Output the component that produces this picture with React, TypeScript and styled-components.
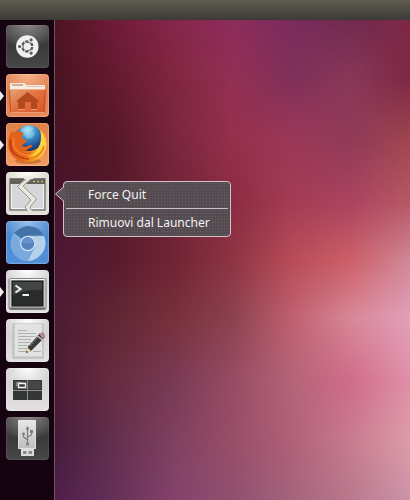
import React from "react";
import styled, { createGlobalStyle, css } from "styled-components";

const GlobalStyle = createGlobalStyle`
  *, *::before, *::after { box-sizing: border-box; }
  body { margin: 0; background: #4c1c34; font-family: "Noto Sans", sans-serif; }
`;

const Desktop = styled.div`
  display: flex;
  flex-direction: column;
  min-height: 100vh;
`;

const TopPanel = styled.header`
  height: 20px;
  background: linear-gradient(#5f5b51, #3c3b37);
`;

const Workspace = styled.div`
  display: flex;
  flex: 1;
`;

const Launcher = styled.nav`
  position: relative;
  z-index: 1;
  width: 55px;
  padding: 5px 5px 16px 6px;
  background: #150410;
  border-right: 1px solid #735463;
`;

const LauncherList = styled.ul`
  display: flex;
  flex-direction: column;
  gap: 6px;
  margin: 0;
  padding: 0;
  list-style: none;
`;

const LauncherItem = styled.li<{ $running?: boolean }>`
  position: relative;
  height: 43px;
  ${(p) =>
    p.$running &&
    css`
      &::before {
        content: "";
        position: absolute;
        left: -6px;
        top: 17px;
        border: solid transparent;
        border-width: 5px 0 5px 4px;
        border-left-color: #eceaec;
      }
    `}
`;

const tones = {
  dark: "radial-gradient(ellipse 70% 55% at 50% 0, #858585, transparent), linear-gradient(#444444, #3a3a3a 50%, #484848)",
  orange: "radial-gradient(ellipse 70% 60% at 50% 0, #f7b58c, transparent), linear-gradient(#dc7443, #e78a59)",
  peach: "linear-gradient(#df8146, #f39b62)",
  cream: "radial-gradient(ellipse 60% 50% at 50% 0, #fffff5, transparent), linear-gradient(#d3d1c7, #e3e1d9)",
  blue: "radial-gradient(ellipse 65% 50% at 50% 0, #9bc1ec, transparent), linear-gradient(#4683cb, #5291d9)",
  light: "radial-gradient(ellipse 60% 50% at 50% 0, #ffffff, transparent), linear-gradient(#cccaca, #e3e1e1)",
};

const Tile = styled.button<{ $tone: keyof typeof tones }>`
  display: block;
  width: 43px;
  height: 43px;
  padding: 0;
  border: 0;
  border-radius: 4px;
  background: ${(p) => tones[p.$tone]};
  box-shadow: inset 0 0 1px 1px rgba(255, 255, 255, ${(p) => (p.$tone === "dark" ? 0.08 : 0.22)});
  cursor: pointer;

  svg { display: block; }
`;

const Quicklist = styled.div`
  position: absolute;
  left: 57px;
  top: 9px;
  width: 168px;
  padding: 0 2px;
  border: 1px solid #d3c3c9;
  border-radius: 4px;
  background: radial-gradient(circle, #686064 30%, transparent 32%) 0 0 / 3px 3px #544c50;
`;

const Pointer = styled.svg`
  position: absolute;
  left: -9px;
  top: 3px;
`;

const QuicklistEntry = styled.button`
  display: block;
  width: 100%;
  height: 26px;
  padding: 0 0 0 22px;
  border: 0;
  background: none;
  color: #f4f0f2;
  font: 12px/26px "Noto Sans", sans-serif;
  text-align: left;
  white-space: nowrap;
  cursor: pointer;

  & + & {
    height: 28px;
    border-top: 1px solid #cdbfc5;
    line-height: 27px;
  }
`;

const Wallpaper = styled.main`
  position: relative;
  flex: 1;
  overflow: hidden;
`;

const ColourBand = styled.div<{ $from: number; $to: number; $colours: string }>`
  position: absolute;
  inset: 0;
  background: linear-gradient(90deg, ${(p) => p.$colours});
  mask-image: linear-gradient(transparent ${(p) => p.$from}%, #000 ${(p) => p.$to}%);
`;

const bands = [
  { at: 0, colours: "#4e1424, #701c38, #86264a, #8e2c5c, #7a2c5c, #702a50, #802844" },
  { at: 12, colours: "#4a1420, #641a30, #80263f, #943054, #80305a, #8a3858, #7c2844" },
  { at: 25, colours: "#481424, #561828, #78263e, #96304c, #9c3858, #903a58, #a04650" },
  { at: 38, colours: "#4a1530, #54182a, #702438, #8c2c42, #a43c54, #ac4460, #b85866" },
  { at: 50, colours: "#4c1834, #581c2e, #702434, #8e3444, #b84c58, #cc6068, #d08898" },
  { at: 62, colours: "#4e1c34, #602634, #78303c, #8c4250, #c06070, #d88898, #e2a0ba" },
  { at: 75, colours: "#4c1c34, #682c40, #783a54, #984c64, #b46478, #d06c8a, #e090a8" },
  { at: 88, colours: "#461c3a, #62304e, #804060, #984e68, #b06078, #c87c90, #dc9ca8" },
  { at: 100, colours: "#50204c, #643058, #84426c, #905070, #a4647c, #b8788c, #cc94a8" },
];

const Svg = ({ children }: { children: React.ReactNode }) => (
  <svg width="43" height="43" viewBox="0 0 43 43" fill="none" aria-hidden="true">
    {children}
  </svg>
);

const DashIcon = () => (
  <Svg>
    <circle cx="21.3" cy="21.5" r="11.2" fill="#f0f0f0" />
    <circle cx="21.3" cy="21.5" r="5" stroke="#5a5a5a" strokeWidth="2.4" />
    {[60, 180, 300].map((a) => (
      <g key={a} transform={`rotate(${a} 21.3 21.5)`}>
        <circle cx="28.6" cy="21.5" r="2.6" fill="#f0f0f0" />
        <circle cx="29" cy="21.5" r="1.6" fill="#5a5a5a" />
      </g>
    ))}
    {[0, 120, 240].map((a) => (
      <path key={a} d="M25 21.5h4" stroke="#f0f0f0" transform={`rotate(${a} 21.3 21.5)`} />
    ))}
  </Svg>
);

const HomeIcon = () => (
  <Svg>
    <defs>
      <linearGradient id="folder" x1="0" y1="0" x2="1" y2="1">
        <stop stopColor="#dfa777" />
        <stop offset="0.5" stopColor="#e46d3c" />
        <stop offset="1" stopColor="#d85628" />
      </linearGradient>
    </defs>
    <path d="M4 10q0-1 1-1h13q1 0 2 2h19v5H4z" fill="#f6eee6" />
    <path d="M6 11h11" stroke="#d9ab91" strokeWidth="2" />
    <path d="M20 12.5h18" stroke="#d9c4b6" />
    <path d="M3 15h37l-1 23q0 1-1 1H5q-1 0-1-1z" fill="url(#folder)" />
    <path d="M4 15.5h35" stroke="#f3ad87" />
    <path d="M3.5 16l1 22q0 .5.5.5h33l1-22" stroke="#bd5129" />
    <path d="M10 27.5 21.5 18 34 27.5h-3V35h-6v-7h-6v7h-7v-7.5z" fill="#b4481e" />
    <path d="M12 35.5h7m6 0h6M4.5 38.500h34" stroke="#f49a70" />
  </Svg>
);

const FirefoxIcon = () => (
  <Svg>
    <defs>
      <radialGradient id="globe" cx=".45" cy=".2" r=".8">
        <stop stopColor="#c0ecfa" />
        <stop offset=".4" stopColor="#3d90cc" />
        <stop offset="1" stopColor="#102f75" />
      </radialGradient>
      <linearGradient id="fox" x1="0" y1=".3" x2="1" y2=".5">
        <stop stopColor="#d94d18" />
        <stop offset=".5" stopColor="#ea6a14" />
        <stop offset=".8" stopColor="#f6a51e" />
        <stop offset="1" stopColor="#ffdc4a" />
      </linearGradient>
    </defs>
    <ellipse cx="22" cy="38" rx="13" ry="3" fill="#9c4b16" opacity=".45" />
    <path d="M6 8q1 3 3 1Q21-2 33 6q9 7 7 18-3 14-18 15-15 0-19-13-2-10 3-18z" fill="url(#fox)" />
    <circle cx="23" cy="15" r="13" fill="url(#globe)" />
    <path d="M16 5q6-3 12 0l-3 3 4 3-3 4-5 1-2-4-4-2z" fill="#9adcf4" opacity=".45" />
    <path d="M34 7q6 7 3 16-4 10-14 11 9-5 11-13 2-7 0-14z" fill="#ffd640" />
    <path d="M6 9q2 2 5 0 4-1 7 1-3 3-2 5 2 2 5 2-1 3-4 4l-1 2q4 2 8-1 3 0 2 2-3 1-5 3-4 2-8 0 6 5 13 2-6 6-13 3-8-4-9-12-1-6 2-11z" fill="#e4611a" />
    <path d="M5 17q-2 8 4 14 6 5 14 5" stroke="#b83d14" strokeWidth="1.5" />
    <path d="M8 15q-2 8 3 13 6 5 14 4" stroke="#ff9a3e" strokeWidth="1.5" opacity=".6" />
    <path d="M24 36q12-3 14-13" stroke="#ee8a18" strokeWidth="2" />
  </Svg>
);

const BrokenWindowIcon = () => (
  <Svg>
    <path d="M4 7h35v31H4z" fill="#d7d7d9" stroke="#807f78" strokeWidth="1.5" />
    <path d="M4 6.500h35v5.500H4z" fill="#62615a" />
    <path d="M5.5 12.500v24h32v-24" stroke="#f4f4f4" />
    <path d="M27 9.500h2m2 0h2m2 0h2" stroke="#cbb56d" strokeWidth="1.500" />
    <path d="M20 6 11 14.500 25 28l-6 7 3 4h4l-2-4 6.500-8L17 14l10-8z" fill="#e9e8e0" />
    <path d="M20 7 11.500 14.500 25 28l-6 7 2 3M25 38l-1-3 6.500-8L17 14l8-7" stroke="#96958c" />
    <path d="M17 4h12l-2 3h-9z" fill="#ecebe3" />
  </Svg>
);

const ChromiumIcon = () => (
  <Svg>
    <circle cx="22" cy="22.500" r="17.5" fill="#84b1df" />
    <path d="M22 22.500 8 12q6-6 14-7 11 0 16 10H22z" fill="#4173a8" />
    <path d="M7.500 13q-7 12 3 22 6 5 13 5l6-13-7-4-5 3z" fill="#79aadd" />
    <path d="M22 15h16q4 10-3 18-5 6-13 7l7-14z" fill="#b5d1ec" />
    <path d="m8 13 9 13q-2-8 6-11h15" stroke="#8fb6dd" strokeWidth=".7" />
    <circle cx="21.7" cy="22.500" r="7.7" fill="#d4e4f6" />
    <circle cx="21.7" cy="22.500" r="6.500" fill="#5482c0" />
    <path d="M15.500 21.500q2-5 6-5 5 0 6 5-6 2-12 0z" fill="#77a2d8" opacity=".5" />
  </Svg>
);

const TerminalIcon = () => (
  <Svg>
    <rect x="3" y="8.5" width="37" height="31" rx="1.5" fill="#c9c9c8" stroke="#858585" />
    <path d="M4 9.5h35" stroke="#f6f6f6" />
    <path d="M4 38.5h35" stroke="#70706f" strokeWidth="2" />
    <rect x="6" y="11" width="31" height="25" fill="#292c2b" stroke="#161817" />
    <path d="M7 12h29v8Q20 19 7 25z" fill="#424644" />
    <path d="m9.5 15.5 5 3.500-5 3.500M16.500 25h6.500" stroke="#f1f3f2" strokeWidth="2" />
  </Svg>
);

const EditorIcon = () => (
  <Svg>
    <path d="M7 5h30v34H7z" fill="#d0d0d0" stroke="#b2b4b3" />
    <path d="M9 5h27v32H9z" fill="#e2e2e1" />
    <path d="M12 11.500h9m-9 3h18m-18 3h17m-17 3h13m-13 3h13m-13 3h11m-11 3h10m-10 3h9m6 0h8" stroke="#b0b2b1" />
    <path d="m20 34 1-5L34 14l5 4-14 14z" fill="#393b3a" />
    <path d="m20 34 1-6 4 4z" fill="#eddda0" />
    <path d="m20 34 .5-2 1.500 1z" fill="#222" />
    <path d="m33 15 3-2q3 1 3 4l-2 3z" fill="#b787a0" />
    <path d="m31.500 17 5 4" stroke="#ccc" strokeWidth="1.500" />
    <path d="m24 27 8-9" stroke="#777" />
  </Svg>
);

const WorkspacesIcon = () => (
  <Svg>
    <rect x="7" y="12" width="29" height="20" fill="#343635" />
    <path d="M8 13h27v8H8z" fill="#444746" />
    <path d="M7 22.500h29M21.500 12v20" stroke="#8e908f" />
    <path d="M10.500 14.500h6v3h-6z" stroke="#929493" />
    <path d="M12.500 15.500h7v4h-7z" fill="#3a3c3b" stroke="#f4f4f4" strokeWidth="1.300" />
  </Svg>
);

const UsbIcon = () => (
  <Svg>
    <defs>
      <linearGradient id="usb" x1="0" y1="0" x2="0" y2="1">
        <stop stopColor="#e8e8e8" />
        <stop offset="1" stopColor="#bdbdbd" />
      </linearGradient>
    </defs>
    <path d="M12 3h18v29H12z" fill="url(#usb)" />
    <path d="M12.500 3v28.500h17V3" stroke="#dedede" />
    <path d="M15 32h13v7H15z" fill="#dcdcdc" />
    <path d="M17 34h3.500v3H17zm5.500 0H26v3h-3.500z" fill="#8a8a8a" />
    <path d="M21.500 27V11m0 12-4-3v-3m4 3 4-2v-4" stroke="#7c7c7c" strokeWidth="1.200" />
    <path d="m21.500 9 2 3.500h-4z" fill="#7c7c7c" />
    <circle cx="21.500" cy="27" r="1.700" fill="#858585" />
    <circle cx="17.500" cy="17" r="1.400" fill="#7c7c7c" />
    <path d="M24 13h3v3h-3z" fill="#7c7c7c" />
  </Svg>
);

type LauncherApp = {
  name: string;
  tone: keyof typeof tones;
  icon: () => React.ReactElement;
  running?: boolean;
  menu?: string[];
};

const apps: LauncherApp[] = [
  { name: "Dash", tone: "dark", icon: DashIcon },
  { name: "Home", tone: "orange", icon: HomeIcon, running: true },
  { name: "Firefox", tone: "peach", icon: FirefoxIcon, running: true },
  { name: "Force Quit", tone: "cream", icon: BrokenWindowIcon, menu: ["Force Quit", "Rimuovi dal Launcher"] },
  { name: "Chromium", tone: "blue", icon: ChromiumIcon },
  { name: "Terminal", tone: "light", icon: TerminalIcon, running: true },
  { name: "Text Editor", tone: "light", icon: EditorIcon },
  { name: "Workspaces", tone: "light", icon: WorkspacesIcon },
  { name: "USB", tone: "dark", icon: UsbIcon },
];

export default function App() {
  return (
    <>
      <GlobalStyle />
      <Desktop>
        <TopPanel />
        <Workspace>
          <Launcher aria-label="Launcher">
            <LauncherList>
              {apps.map(({ name, tone, icon: Icon, running, menu }) => (
                <LauncherItem key={name} $running={running}>
                  <Tile type="button" $tone={tone} aria-label={name}>
                    <Icon />
                  </Tile>
                  {menu && (
                    <Quicklist role="menu">
                      <Pointer width="10" height="18" viewBox="0 0 10 18" aria-hidden="true">
                        <path d="M10 1 .5 9l9.500 8z" fill="#5b5357" />
                        <path d="M9 1.500.5 9l8.500 7.500" fill="none" stroke="#d3c3c9" />
                      </Pointer>
                      {menu.map((label) => (
                        <QuicklistEntry key={label} type="button" role="menuitem">
                          {label}
                        </QuicklistEntry>
                      ))}
                    </Quicklist>
                  )}
                </LauncherItem>
              ))}
            </LauncherList>
          </Launcher>
          <Wallpaper>
            {bands.map((band, i) => (
              <ColourBand
                key={band.at}
                $from={i === 0 ? -1 : bands[i - 1].at}
                $to={band.at}
                $colours={band.colours}
              />
            ))}
          </Wallpaper>
        </Workspace>
      </Desktop>
    </>
  );
}
